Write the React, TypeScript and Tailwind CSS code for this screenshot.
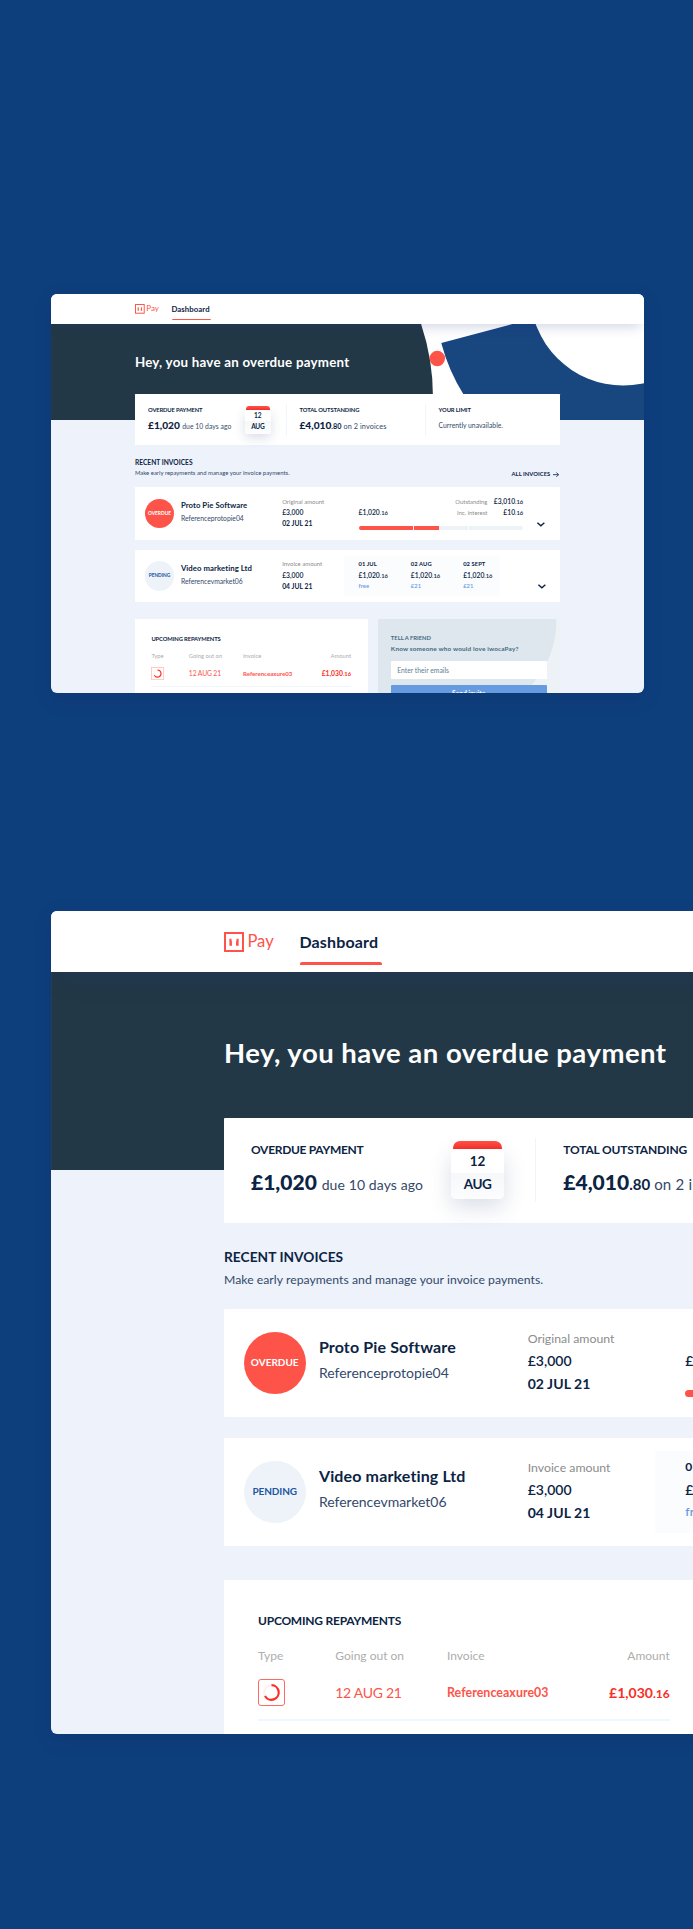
import { Fragment } from 'react';

function Money({ whole, cents }: { whole: string; cents: string }) {
  return (
    <span className="whitespace-nowrap text-[14px] font-semibold text-[#0c2444]">
      {whole}
      <span className="text-[12px] leading-none">{cents}</span>
    </span>
  );
}

function Chevron() {
  return (
    <svg className="h-[10.5px] w-[16px] overflow-visible" viewBox="0 0 16 10.5" fill="none">
      <path d="M0.8 1.4 L8 8 L15.2 1.4" stroke="#0c2444" strokeWidth="2.9" />
    </svg>
  );
}

function Header() {
  return (
    <header className="relative z-10 h-[61px] bg-white shadow-[0_14px_24px_-8px_rgba(30,50,130,0.2)]">
      <div className="flex pl-[173px]">
        <svg className="mt-[21.2px] h-5 w-5" viewBox="0 0 20 20" fill="none">
          <rect x="1" y="1" width="18" height="18" stroke="#fe5349" strokeWidth="2" />
          <path d="M5.4 6.7 H7.3 Q8.3 10 8 13.7 H5.4 Z" fill="#fe5349" />
          <path d="M14.6 6.7 H12.7 Q11.7 10 12 13.7 H14.6 Z" fill="#fe5349" />
        </svg>
        <span className="ml-[3.4px] mt-[20.7px] w-[52px] text-[16.6px] leading-5 text-[#fe5349]">Pay</span>
        <div className="mt-[21.8px]">
          <div className="text-[16px] font-bold leading-5 tracking-[0.16px] text-[#0c2444]">Dashboard</div>
          <div className="ml-[1px] mt-[9.7px] h-[2.8px] w-[81.3px] rounded-t-[2px] bg-[#fe5349]" />
        </div>
      </div>
    </header>
  );
}

function Hero() {
  return (
    <section className="relative h-[198.8px] overflow-hidden bg-white">
      <svg className="absolute left-0 top-0 h-[199.4px] w-[1223px]" viewBox="0 61 1223 199.4">
        <path d="M0 60.8 H763 A475 475 0 0 1 785 260.4 H0 Z" fill="#223846" />
        <path d="M804.7 100.4 L952 60.8 H1223 V260.4 H888 Q866 234 851 207 Q820 158 804.7 100.4 Z" fill="#18467f" />
        <circle cx="1180" cy="-4" r="192" fill="#fff" />
        <circle cx="796.5" cy="132" r="16" fill="#fe5349" />
      </svg>
      <h1 className="relative pl-[173px] pt-[65.6px] text-[27.5px] font-bold leading-8 tracking-[0.48px] text-white">
        Hey, you have an overdue payment
      </h1>
    </section>
  );
}

function Stats() {
  return (
    <section className="flex h-[105.3px] rounded-[1px] bg-white">
      <div className="flex w-[311.3px]">
        <div className="pl-[27px] pt-[24.2px]">
          <div className="text-[12px] font-bold leading-4 tracking-[-0.3px] text-[#0c2444]">OVERDUE PAYMENT</div>
          <div className="mt-[12.3px] flex items-baseline whitespace-nowrap leading-6">
            <span className="text-[21px] font-black text-[#0c2444]">£1,020</span>
            <span className="ml-[4.8px] text-[14px] tracking-[0.1px] text-[#33496a]">due 10 days ago</span>
          </div>
        </div>
        <div className="ml-auto mr-[31px] mt-[23.4px] flex flex-col items-center">
          <div className="h-[8.6px] w-[48.5px] rounded-t-[7px] bg-linear-to-b from-[#fe5349] to-[#fb2d24]" />
          <div className="h-[49.8px] w-[53.5px] overflow-visible rounded-[5px] bg-white text-center text-[13.5px] font-bold leading-[24.4px] text-[#0c2444] shadow-[0_8px_22px_rgba(30,60,110,0.17)]">
            <div className="h-[23.4px]">12</div>
            <div className="h-[26.4px] rounded-b-[5px] bg-linear-to-b from-[#f5f7f9] to-[#fdfdfe] leading-[23.4px] tracking-[-0.4px]">AUG</div>
          </div>
        </div>
      </div>
      <div className="mt-[20.8px] h-[64px] w-px bg-[#f1f4f8]" />
      <div className="w-[286.5px] pl-[27px] pt-[24.2px]">
        <div className="text-[12px] font-bold leading-4 tracking-[-0.18px] text-[#0c2444]">TOTAL OUTSTANDING</div>
        <div className="mt-[12.3px] flex items-baseline whitespace-nowrap leading-6">
          <span className="text-[21px] font-black text-[#0c2444]">£4,010</span>
          <span className="text-[15px] font-bold text-[#0c2444]">.80</span>
          <span className="ml-[4px] text-[15px] tracking-[0.2px] text-[#33496a]">on 2 invoices</span>
        </div>
      </div>
      <div className="mt-[20.8px] h-[64px] w-px bg-[#f1f4f8]" />
      <div className="pl-[26.5px] pt-[24.2px]">
        <div className="text-[12px] font-bold leading-4 tracking-[-0.19px] text-[#0c2444]">YOUR LIMIT</div>
        <div className="mt-[12.4px] text-[14px] leading-6 text-[#33496a]">Currently unavailable.</div>
      </div>
    </section>
  );
}

function InvoiceLead({ status, name, reference, label, date }: { status: 'OVERDUE' | 'PENDING'; name: string; reference: string; label: string; date: string }) {
  const tone = status === 'OVERDUE' ? 'bg-[#fe5349] text-white' : 'bg-[#edf3f8] text-[#1d56a3] tracking-[-0.1px]';
  return (
    <>
      <div className={`ml-5 mt-[23.2px] flex h-[61.5px] w-[61.5px] shrink-0 items-center justify-center rounded-full text-[10px] font-bold ${tone}`}>
        {status}
      </div>
      <div className="ml-[13.4px] w-[208.8px] shrink-0 pt-[28.3px]">
        <div className="text-[16px] font-bold leading-5 tracking-[0.14px] text-[#0c2444]">{name}</div>
        <div className="mt-[7.1px] text-[14px] leading-[18px] text-[#33496a]">{reference}</div>
      </div>
      <div className="w-[127.6px] shrink-0 pt-[21.7px]">
        <div className="text-[12.3px] leading-4 text-[#8c8c8c]">{label}</div>
        <div className="mt-[5.1px] text-[14px] font-semibold leading-[18px] text-[#0c2444]">£3,000</div>
        <div className="mt-[5.7px] text-[14px] font-bold leading-[18px] tracking-[0.06px] text-[#0c2444]">{date}</div>
      </div>
    </>
  );
}

const schedule = [
  { date: '01 JUL', fee: 'free' },
  { date: '02 AUG', fee: '£21' },
  { date: '02 SEPT', fee: '£21' },
];

function Invoices() {
  return (
    <>
      <div className="mt-[25px] flex items-end justify-between">
        <div>
          <h2 className="text-[13.7px] font-bold leading-[18px] tracking-[0.05px] text-[#0c2444]">RECENT INVOICES</h2>
          <p className="mt-[6.3px] text-[12.2px] leading-4 tracking-[0.04px] text-[#33496a]">
            Make early repayments and manage your invoice payments.
          </p>
        </div>
        <div className="mb-[-2px] flex items-center text-[12px] font-bold leading-4 tracking-[0.1px] text-[#0c2444]">
          ALL INVOICES
          <svg className="ml-[6px] mr-[1px] h-[11px] w-[12.5px]" viewBox="0 0 12.5 11" fill="none" stroke="#0c2444" strokeWidth="1.7">
            <path d="M0 5.5 H11.4 M7 1 L11.5 5.5 L7 10" />
          </svg>
        </div>
      </div>

      <article className="mt-[20.9px] flex h-[108.3px] rounded-[1px] bg-white">
        <InvoiceLead status="OVERDUE" name="Proto Pie Software" reference="Referenceprotopie04" label="Original amount" date="02 JUL 21" />
        <div className="ml-[30px] w-[339.5px] pt-[18.6px]">
          <div className="flex h-[44px] items-end justify-between leading-[22px]">
            <Money whole="£1,020" cents=".16" />
            <div className="grid grid-cols-[auto_auto] grid-rows-[22px_22px] items-baseline gap-x-[13.3px] text-right text-[12.2px] text-[#8c8c8c]">
              <span>Outstanding</span>
              <Money whole="£3,010" cents=".16" />
              <span>Inc. interest</span>
              <Money whole="£10" cents=".16" />
            </div>
          </div>
          <div className="mt-[18px] flex h-[7.4px] gap-[2px] overflow-hidden rounded-full">
            <div className="w-[112px] bg-[#fe5349]" />
            <div className="flex w-[112px] bg-[#edf2f7]">
              <div className="w-[52px] bg-[#fe5349]" />
            </div>
            <div className="flex-1 bg-[#edf2f7]" />
          </div>
        </div>
        <div className="ml-[29.4px] pt-[72px]">
          <Chevron />
        </div>
      </article>

      <article className="mt-[20.7px] flex h-[108.3px] rounded-[1px] bg-white">
        <InvoiceLead status="PENDING" name="Video marketing Ltd" reference="Referencevmarket06" label="Invoice amount" date="04 JUL 21" />
        <div className="mt-[12.7px] flex h-[82px] w-[321.5px] bg-[#fafcfe] pl-[30px] pt-[8.8px]">
          {schedule.map((s) => (
            <div key={s.date} className="w-[107.8px] shrink-0">
              <div className="text-[12px] font-bold leading-4 tracking-[0.15px] text-[#0c2444]">{s.date}</div>
              <div className="mt-[5.3px] flex h-[18px] leading-[18px]">
                <Money whole="£1,020" cents=".16" />
              </div>
              <div className="mt-[5.6px] text-[12px] font-semibold leading-4 tracking-[0.2px] text-[#669be0]">{s.fee}</div>
            </div>
          ))}
        </div>
        <div className="ml-[77.6px] pt-[69.5px]">
          <Chevron />
        </div>
      </article>
    </>
  );
}

const repayments = [{ date: '12 AUG 21', reference: 'Referenceaxure03', whole: '£1,030', cents: '.16' }];

function Repayments() {
  return (
    <section className="w-[480px] shrink-0 rounded-[1px] bg-white pl-[34px] pr-[34.3px] pt-[32.6px]">
      <h2 className="text-[12px] font-bold leading-4 tracking-[-0.23px] text-[#0c2444]">UPCOMING REPAYMENTS</h2>
      <div className="mt-[19.2px] grid grid-cols-[77.3px_111.7px_1fr_auto]">
        <div className="text-[12px] leading-4 text-[#adadad]">Type</div>
        <div className="text-[12px] leading-4 text-[#adadad]">Going out on</div>
        <div className="text-[12px] leading-4 text-[#adadad]">Invoice</div>
        <div className="text-right text-[12px] leading-4 text-[#adadad]">Amount</div>
        {repayments.map((r) => (
          <Fragment key={r.reference}>
            <svg className="mt-[14.9px] h-[27px] w-[27px]" viewBox="0 0 27 27" fill="none">
              <rect x="0.5" y="0.5" width="26" height="26" rx="2.5" stroke="#fe6a62" />
              <circle cx="13.5" cy="13.5" r="7.3" stroke="#fff0ef" strokeWidth="2.2" />
              <path d="M13.5 6.2 A7.3 7.3 0 1 1 7 17" stroke="#fb2d24" strokeWidth="2.2" />
            </svg>
            <div className="mt-[14.9px] text-[14px] leading-[27px] tracking-[-0.3px] text-[#fe5349]">{r.date}</div>
            <div className="mt-[14.9px] text-[12.4px] font-bold leading-[27px] tracking-[0.06px] text-[#fe5349]">{r.reference}</div>
            <div className="mt-[14.9px] whitespace-nowrap text-[14px] font-bold leading-[27px] text-[#fb2d24]">
              {r.whole}
              <span className="text-[12px] leading-none">{r.cents}</span>
            </div>
          </Fragment>
        ))}
      </div>
      <div className="mt-[13.2px] h-[1.6px] bg-[#f1f6fa]" />
    </section>
  );
}

function TellAFriend() {
  return (
    <section className="relative ml-[20.5px] w-[375.5px] shrink-0 overflow-hidden bg-[#edf2f6] px-[27.3px] pt-[30.8px]">
      <svg className="absolute left-0 top-0 h-[200px] w-[375.5px]" viewBox="0 0 375.5 200">
        <path d="M0 0 H367.5 A195 195 0 0 1 172.5 200 H0 Z" fill="#dde7ed" />
      </svg>
      <div className="relative">
        <h2 className="text-[12px] font-bold leading-4 text-[#456a80]">TELL A FRIEND</h2>
        <p className="mt-[6.6px] whitespace-nowrap text-[13.2px] font-bold leading-4 tracking-[0.33px] text-[#456a80]">
          Know someone who would love iwocaPay?
        </p>
        <div className="mt-[18.2px] h-[36.4px] rounded-[2px] bg-white pl-[13px] text-[14px] leading-[38px] text-[#5d8093]">
          Enter their emails
        </div>
        <div className="mt-[12.4px] h-[40px] rounded-[2px] bg-[#669be0] text-center text-[14px] font-bold leading-[36px] text-white">
          Send invite
        </div>
      </div>
    </section>
  );
}

function Dashboard() {
  return (
    <div className="h-[824px] w-[1222.7px] overflow-hidden bg-[#edf2fb]">
      <Header />
      <Hero />
      <div className="relative ml-[173px] mt-[-52.8px] w-[876px]">
        <Stats />
        <Invoices />
        <div className="mt-[34px] flex h-[160px]">
          <Repayments />
          <TellAFriend />
        </div>
      </div>
    </div>
  );
}

export default function App() {
  return (
    <main className="flex h-[1929px] w-[693px] flex-col overflow-hidden bg-[#0e3f7d] pl-[51px] pt-[294px] font-['Lato','Liberation_Sans',sans-serif]">
      <div className="h-[399px] w-[592.5px] shrink-0 overflow-hidden rounded-[6px] shadow-[0_6px_20px_rgba(0,20,60,0.12)]">
        <div className="[zoom:0.485]">
          <Dashboard />
        </div>
      </div>
      <div className="mt-[217.5px] h-[823.5px] w-[1222.7px] shrink-0 overflow-hidden rounded-[6px] shadow-[0_6px_20px_rgba(0,20,60,0.12)]">
        <Dashboard />
      </div>
    </main>
  );
}
